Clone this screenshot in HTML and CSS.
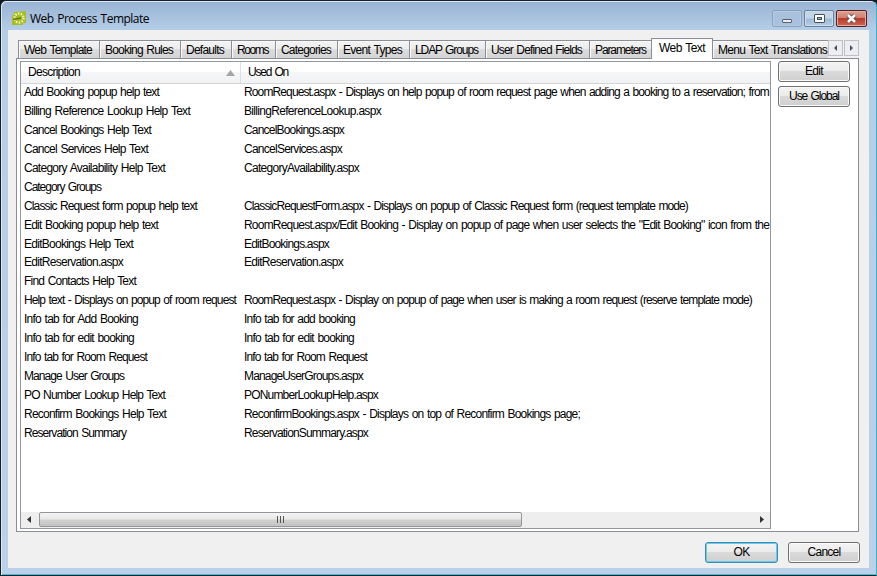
FILE: index.html
```
<!DOCTYPE html>
<html lang="en">
<head>
<meta charset="utf-8">
<title>Web Process Template</title>
<link rel="stylesheet" href="styles.css">
</head>
<body>
<div class="window">
  <header class="titlebar">
    <svg class="logo" viewBox="0 0 14 14"><path fill="#a9bd22" d="M0 4h2V1l12-1v12h-3v2H0z"/><circle cx="7" cy="7" r="4.500" fill="none" stroke="#f1f3b4" stroke-width="2.400" stroke-dasharray="1.500 1.300"/><path stroke="#5e7c1e" stroke-width="1.500" d="m1 8.500 8-1.500"/></svg>
    <h1 data-w="119">Web Process Template</h1>
    <div class="controls">
      <span class="ctl min"><svg viewBox="0 0 28 15"><rect x="9.500" y="8.500" width="9" height="3" rx=".5" fill="#eee" stroke="#56606d"/></svg></span>
      <span class="ctl max"><svg viewBox="0 0 28 15"><rect x="9.500" y="3.500" width="10" height="8" rx=".5" fill="#fff" stroke="#46505d"/><rect x="12.500" y="6.500" width="4" height="2" fill="#9bb6d0" stroke="#46505d"/></svg></span>
      <span class="ctl close"><svg viewBox="0 0 29 15"><path d="m11 4 7 7m0-7-7 7" stroke="#5f4248" stroke-width="4.400"/><path d="m11 4 7 7m0-7-7 7" stroke="#fff" stroke-width="2.600"/></svg></span>
    </div>
  </header>
  <main class="client">
    <nav class="tabs">
      <span class="tab t1" data-w="68">Web Template</span><span class="tab t2" data-w="68">Booking Rules</span><span class="tab t3" data-w="38">Defaults</span><span class="tab t4" data-w="31">Rooms</span><span class="tab t5" data-w="50">Categories</span><span class="tab t6" data-w="59">Event Types</span><span class="tab t7" data-w="63">LDAP Groups</span><span class="tab t8" data-w="91">User Defined Fields</span><span class="tab t9" data-w="51">Parameters</span><span class="tab active" data-w="46">Web Text</span><span class="tab last" data-w="109">Menu Text Translations</span>
      <span class="spin"><svg viewBox="0 0 13 14"><path d="M8 4v6L5 7z" fill="#454b60"/></svg></span><span class="spin"><svg viewBox="0 0 13 14"><path d="M5 4v6l3-3z" fill="#454b60"/></svg></span>
    </nav>
    <section class="panel">
      <div class="list">
        <div class="head"><span class="c1"><span data-w="52">Description</span><svg class="sort" viewBox="0 0 9 6"><path d="M0 6 4.500 0 9 6z" fill="#a5a5a5"/></svg></span><span class="c2" data-w="40">Used On</span></div>
        <div class="rows">
          <div class="row"><span data-w="135">Add Booking popup help text</span><span data-w="525">RoomRequest.aspx - Displays on help popup of room request page when adding a booking to a reservation; from</span></div>
          <div class="row"><span data-w="166">Billing Reference Lookup Help Text</span><span data-w="137">BillingReferenceLookup.aspx</span></div>
          <div class="row"><span data-w="127">Cancel Bookings Help Text</span><span data-w="100">CancelBookings.aspx</span></div>
          <div class="row"><span data-w="124">Cancel Services Help Text</span><span data-w="98">CancelServices.aspx</span></div>
          <div class="row"><span data-w="141">Category Availability Help Text</span><span data-w="115">CategoryAvailability.aspx</span></div>
          <div class="row"><span data-w="77">Category Groups</span><span></span></div>
          <div class="row"><span data-w="173">Classic Request form popup help text</span><span data-w="444">ClassicRequestForm.aspx - Displays on popup of Classic Request form (request template mode)</span></div>
          <div class="row"><span data-w="134">Edit Booking popup help text</span><span data-w="525">RoomRequest.aspx/Edit Booking - Display on popup of page when user selects the "Edit Booking" icon from the</span></div>
          <div class="row"><span data-w="109">EditBookings Help Text</span><span data-w="85">EditBookings.aspx</span></div>
          <div class="row"><span data-w="99">EditReservation.aspx</span><span data-w="99">EditReservation.aspx</span></div>
          <div class="row"><span data-w="112">Find Contacts Help Text</span><span></span></div>
          <div class="row"><span data-w="212">Help text - Displays on popup of room request</span><span data-w="508">RoomRequest.aspx - Display on popup of page when user is making a room request (reserve template mode)</span></div>
          <div class="row"><span data-w="114">Info tab for Add Booking</span><span data-w="111">Info tab for add booking</span></div>
          <div class="row"><span data-w="110">Info tab for edit booking</span><span data-w="110">Info tab for edit booking</span></div>
          <div class="row"><span data-w="123">Info tab for Room Request</span><span data-w="123">Info tab for Room Request</span></div>
          <div class="row"><span data-w="100">Manage User Groups</span><span data-w="119">ManageUserGroups.aspx</span></div>
          <div class="row"><span data-w="141">PO Number Lookup Help Text</span><span data-w="134">PONumberLookupHelp.aspx</span></div>
          <div class="row"><span data-w="142">Reconfirm Bookings Help Text</span><span data-w="336">ReconfirmBookings.aspx - Displays on top of Reconfirm Bookings page;</span></div>
          <div class="row"><span data-w="102">Reservation Summary</span><span data-w="124">ReservationSummary.aspx</span></div>
        </div>
        <div class="scroll">
          <svg class="arrow" viewBox="0 0 18 16"><path d="M10 4v7L6 7.500z" fill="#333"/></svg>
          <div class="thumb"><i></i><i></i><i></i></div>
          <svg class="arrow end" viewBox="0 0 18 16"><path d="M8 4v7l4-3.500z" fill="#333"/></svg>
        </div>
      </div>
      <div class="side"><button data-w="18">Edit</button><button data-w="50">Use Global</button></div>
    </section>
    <footer class="actions"><button class="ok" data-w="16">OK</button><button data-w="33">Cancel</button></footer>
  </main>
</div>
<script src="fit.js"></script>
</body>
</html>
```
FILE: fit.js
```
// Tracks each label so that its text takes the width given in data-w.
document.querySelectorAll('[data-w]').forEach((el) => {
  const range = document.createRange();
  range.selectNodeContents(el);
  el.style.letterSpacing = '0px';
  const natural = range.getBoundingClientRect().width;
  const gap = (Number(el.dataset.w) - natural) / el.textContent.length;
  el.style.letterSpacing = gap.toFixed(3) + 'px';
});
```
FILE: styles.css
```
* { box-sizing: border-box; }
html { background: #111820; }
body {
  margin: 0;
  font: 12px/19px "Liberation Sans", Arial, sans-serif;
  word-spacing: 1px;
  color: #000;
}
.window {
  width: 877px;
  height: 576px;
  padding: 0 7px 7px;
  border: 1px solid #15202b;
  border-right-color: #32b4cb;
  border-radius: 6px 6px 0 0;
  background: linear-gradient(#98b3d2, #b5cee8 30px, #bad1ea);
  box-shadow: inset 1px 1px #d9e9f7, inset 0 -1px #42bfd5;
  overflow: hidden;
}
.titlebar { height: 29px; display: flex; align-items: flex-start; padding-left: 4px; }
.logo { width: 14px; height: 14px; margin-top: 10px; }
h1 {
  margin: 8px auto 0 4px;
  font: 12px/19px "Open Sans", "Noto Sans", sans-serif;
  white-space: nowrap;
}
.controls { display: flex; gap: 2px; margin: 9px 2px 0 0; }
.ctl { width: 30px; height: 17px; border: 1px solid #6b829c; border-radius: 2px; background: linear-gradient(#c3d5e7 48%, #9fb9d4 52%, #b5cce4); box-shadow: inset 0 0 0 1px #ccdcec; }
.ctl svg { display: block; width: 100%; height: 100%; }
.min { border-color: #8ba3be; background: #a9c1dc; box-shadow: inset 0 0 0 1px #b5cae1; }
.close { width: 31px; border-color: #571d21; background: linear-gradient(#dda193, #d0806e 45%, #b73b28 50%, #cc6752); box-shadow: inset 0 0 0 1px #e2aea2; }
.client { height: 538px; padding: 8px 10px 0 8px; background: #f0f0f0; }
.tabs { display: flex; align-items: flex-end; height: 20px; padding-left: 2px; }
.tab {
  height: 18px;
  flex: none;
  border: 1px solid #8b8e96;
  border-bottom: 0;
  border-right: 0;
  background: linear-gradient(#f3f3f3, #ececec 50%, #dcdcdc 50%, #d4d4d4);
  box-shadow: inset 1px 1px #fafafa;
  white-space: nowrap;
  overflow: hidden;
  padding-left: 5px;
}
.t1, .t2 { width: 81px; }
.t3 { width: 51px; }
.t4 { width: 44px; }
.t5 { width: 62px; }
.t6 { width: 72px; }
.t7 { width: 76px; }
.t8 { width: 104px; }
.t9 { width: 62px; }
.active { width: 62px; height: 21px; margin-bottom: -1px; padding-left: 7px; border-right: 1px solid #8b8e96; background: #fff; position: relative; }
.last { width: 115px; border-left: 0; }
.spin { width: 15px; height: 16px; margin: 0 1px 2px 0; flex: none; border: 1px solid #bfc1ca; background: #eeeef2; }
.spin svg { display: block; width: 100%; height: 100%; }
.panel { display: flex; gap: 7px; height: 474px; width: 843px; padding: 2px 3px; border: 1px solid #8a8d95; background: #fff; }
.list { width: 751px; height: 468px; border: 1px solid #93969d; display: flex; flex-direction: column; overflow: hidden; }
.head { display: flex; flex: none; height: 22px; line-height: 21px; border-bottom: 1px solid #d5d5d5; background: linear-gradient(#fff 45%, #f5f6f8 50%, #f1f2f4); }
.c1 { width: 220px; padding: 0 5px 0 7px; border-right: 1px solid #dcdfe3; display: flex; justify-content: space-between; align-items: center; }
.c2 { padding-left: 7px; }
.sort { width: 9px; height: 6px; }
.rows { flex: 1; min-height: 0; margin-top: -1px; }
.row { display: grid; grid-template-columns: 220px 529px; height: 18.94px; white-space: nowrap; }
.row span { padding-left: 3px; }
.scroll { height: 16px; flex: none; display: flex; background: #eee; }
.arrow { width: 18px; height: 16px; }
.end { margin-left: auto; }
.thumb { width: 483px; height: 15px; border: 1px solid #92959a; border-radius: 2px; background: linear-gradient(#f4f4f4, #e8e8e8 48%, #d2d2d2 52%, #c2c2c2); display: flex; justify-content: center; align-items: center; gap: 2px; }
.thumb i { width: 1px; height: 7px; background: #555; }
.side { display: flex; flex-direction: column; gap: 4px; }
button {
  width: 72px;
  height: 21px;
  padding: 0;
  border: 1px solid #707070;
  border-radius: 3px;
  background: linear-gradient(#f3f3f3, #ebebeb 48%, #dadada 50%, #cfcfcf);
  box-shadow: inset 0 0 0 1px #fafafa;
  font: inherit;
  line-height: 19px;
  word-spacing: 1px;
  color: #000;
}
.actions { display: flex; justify-content: flex-end; gap: 10px; padding-top: 10px; }
.actions button { margin-right: -1px; }
.actions .ok { width: 73px; margin-right: 0; border-color: #3c8ab5; box-shadow: inset 0 0 0 1px #62cdee; }
```
